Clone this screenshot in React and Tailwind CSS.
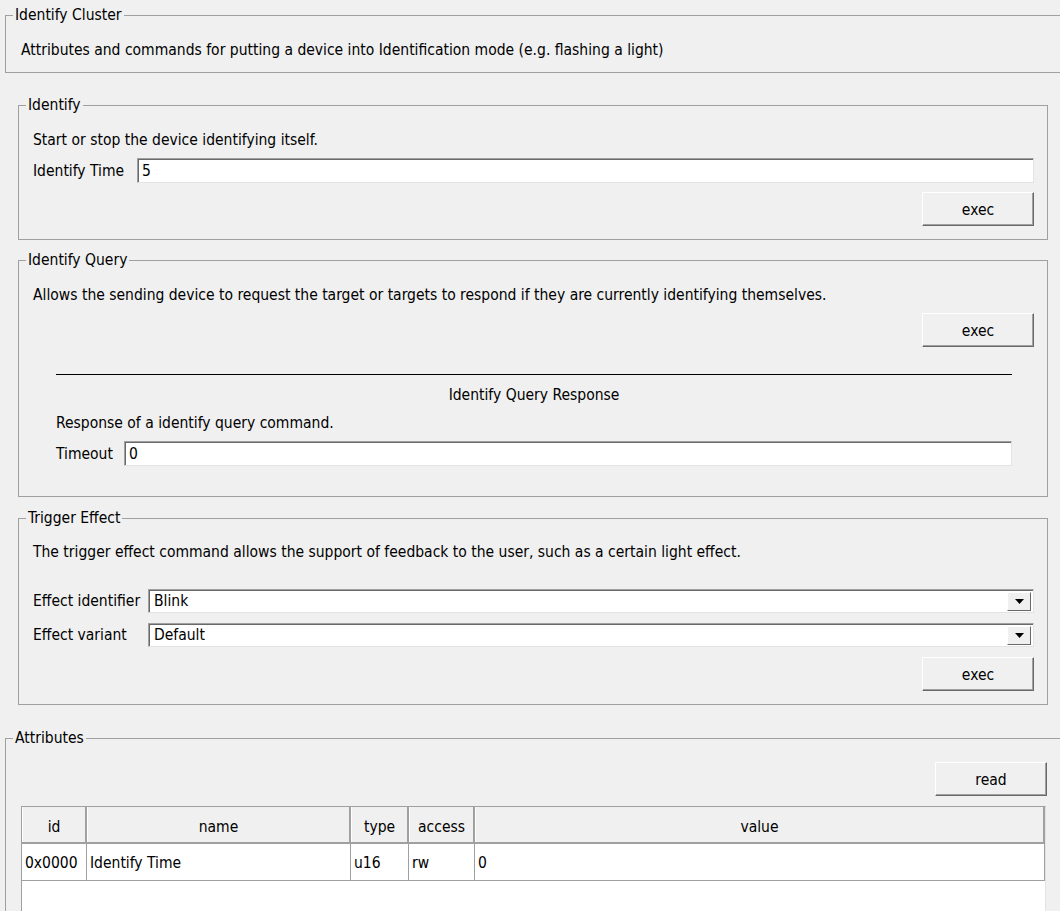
import React from 'react';

const font = "font-['DejaVu_Sans_Condensed','Liberation_Sans',sans-serif]";

function Button({ children }) {
  return (
    <button className="w-[112px] h-[34px] pt-[1px] bg-[#f0f0f0] border border-t-white border-l-white border-r-[#696969] border-b-[#696969] shadow-[inset_-1px_-1px_0_#a0a0a0] text-[15.5px] leading-[20px] text-black">
      {children}
    </button>
  );
}

function TextInput({ value }) {
  return (
    <div className="h-[25px] flex-1 bg-white border border-t-[#a0a0a0] border-l-[#a0a0a0] border-r-[#e3e3e3] border-b-[#e3e3e3] shadow-[inset_1px_1px_0_#696969] flex items-center pl-[4px]">
      {value}
    </div>
  );
}

function Combo({ value }) {
  return (
    <div className="relative h-[24px] flex-1 bg-white border border-t-[#a0a0a0] border-l-[#a0a0a0] border-r-[#e3e3e3] border-b-[#e3e3e3] shadow-[inset_1px_1px_0_#696969] flex items-center pl-[5px]">
      {value}
      <div className="absolute right-[2px] top-[2px] bottom-[1px] w-[24px] bg-[#f0f0f0] border border-t-white border-l-white border-r-[#696969] border-b-[#696969] flex items-center justify-center">
        <svg width="9" height="5" viewBox="0 0 9 5">
          <path d="M0 0h9L4.5 5z" fill="#000" />
        </svg>
      </div>
    </div>
  );
}

function Group({ title, className = '', children }) {
  return (
    <fieldset className={`border border-[#a0a0a0] ${className}`}>
      <legend className="ml-[7px] px-[2px] leading-[20px]">{title}</legend>
      {children}
    </fieldset>
  );
}

export default function App() {
  return (
    <div className={`w-[1060px] h-[911px] overflow-hidden bg-[#f0f0f0] text-black text-[15.5px] leading-[20px] pt-[5px] pl-[5px] ${font}`}>
      {/* Cluster header */}
      <Group title="Identify Cluster" className="w-[1075px]">
        <div className="pl-[15px] pt-[15px] pb-[12px]">
          Attributes and commands for putting a device into Identification mode (e.g. flashing a light)
        </div>
      </Group>

      {/* Identify */}
      <Group title="Identify" className="ml-[13px] mt-[22px] w-[1030px]">
        <div className="pl-[14px] pr-[13px] pt-[15px] pb-[13px]">
          <div>Start or stop the device identifying itself.</div>
          <div className="mt-[8px] flex items-center">
            <span className="w-[104px] shrink-0">Identify Time</span>
            <TextInput value="5" />
          </div>
          <div className="mt-[9px] flex justify-end">
            <Button>exec</Button>
          </div>
        </div>
      </Group>

      {/* Identify Query */}
      <Group title="Identify Query" className="ml-[13px] mt-[10px] w-[1030px]">
        <div className="pl-[14px] pr-[13px] pt-[15px]">
          <div>Allows the sending device to request the target or targets to respond if they are currently identifying themselves.</div>
          <div className="mt-[8px] flex justify-end">
            <Button>exec</Button>
          </div>
          <div className="mt-[27px] ml-[23px] mr-[22px] border-t border-black pb-[30px]">
            <div className="mt-[10px] text-center">Identify Query Response</div>
            <div className="mt-[8px]">Response of a identify query command.</div>
            <div className="mt-[8px] flex items-center">
              <span className="w-[68px] shrink-0">Timeout</span>
              <TextInput value="0" />
            </div>
          </div>
        </div>
      </Group>

      {/* Trigger Effect */}
      <Group title="Trigger Effect" className="ml-[13px] mt-[11px] w-[1030px]">
        <div className="pl-[14px] pr-[13px] pt-[14px] pb-[13px]">
          <div>The trigger effect command allows the support of feedback to the user, such as a certain light effect.</div>
          <div className="mt-[27px] flex items-center">
            <span className="w-[115px] shrink-0">Effect identifier</span>
            <Combo value="Blink" />
          </div>
          <div className="mt-[10px] flex items-center">
            <span className="w-[115px] shrink-0">Effect variant</span>
            <Combo value="Default" />
          </div>
          <div className="mt-[10px] flex justify-end">
            <Button>exec</Button>
          </div>
        </div>
      </Group>

      {/* Attributes */}
      <Group title="Attributes" className="mt-[23px] w-[1075px] h-[300px]">
        <div className="pl-[15px] pt-[14px]">
          <div className="w-[1026px] flex justify-end">
            <Button>read</Button>
          </div>
          <div className="mt-[10px] w-[1025px] h-[200px] bg-white border border-[#a0a0a0] border-r-[#e3e3e3]">
            <div className="flex h-[37px] bg-[#f0f0f0] border-b-2 border-[#a0a0a0]">
              {[
                ['id', 'w-[65px]'],
                ['name', 'w-[264px]'],
                ['type', 'w-[58px]'],
                ['access', 'w-[66px]'],
                ['value', 'flex-1'],
              ].map(([h, w]) => (
                <div key={h} className={`${w} flex items-center justify-center pt-[4px] border-r-2 border-[#a0a0a0] border-l border-l-white`}>
                  {h}
                </div>
              ))}
            </div>
            <div className="flex h-[37px] border-b border-[#a0a0a0]">
              {[
                ['0x0000', 'w-[65px]'],
                ['Identify Time', 'w-[264px]'],
                ['u16', 'w-[58px]'],
                ['rw', 'w-[66px]'],
                ['0', 'flex-1'],
              ].map(([v, w], i) => (
                <div key={i} className={`${w} flex items-center pl-[3px] pt-[2px] border-r border-[#a0a0a0]`}>
                  {v}
                </div>
              ))}
            </div>
          </div>
        </div>
      </Group>
    </div>
  );
}
